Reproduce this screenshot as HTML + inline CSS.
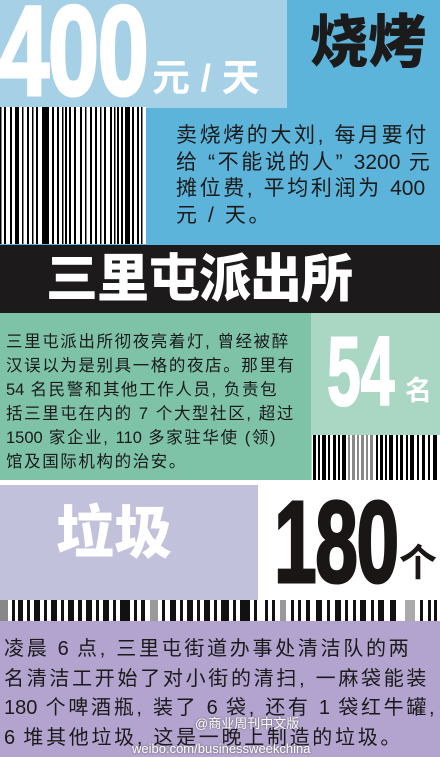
<!DOCTYPE html>
<html><head><meta charset="utf-8"><style>
*{margin:0;padding:0;box-sizing:border-box}
body{width:440px;height:757px;overflow:hidden;position:relative;background:#fff;font-family:"Liberation Sans","Noto Sans CJK SC",sans-serif}
.a{position:absolute}
.cn{font-family:"Liberation Sans","Noto Sans CJK SC",sans-serif;white-space:nowrap}
.num{font-family:"Liberation Sans Narrow","Liberation Sans",sans-serif;font-weight:bold;line-height:1;white-space:nowrap}
.l{letter-spacing:0}
</style></head><body>
<div class="a" style="left:0;top:0;width:440px;height:245px;background:#5db4da"></div>
<div class="a" style="left:0;top:0;width:287px;height:108px;background:#a6d0e6"></div>
<div class="a num" style="left:-2px;top:-12px;font-size:128px;color:#fff;transform:scaleX(0.72);transform-origin:left top;letter-spacing:-2px;-webkit-text-stroke:3px #fff">400</div>
<div class="a cn" style="left:152px;top:60px;font-size:38px;font-weight:bold;color:#fff;line-height:1">元 / 天</div>
<div class="a cn" style="left:310px;top:14px;font-size:58px;font-weight:900;color:#1b1b1b;line-height:1">烧烤</div>
<svg class="a" style="left:0;top:107px" width="146" height="137" viewBox="0 0 146 137">
<rect width="146" height="137" fill="#fff"/>
<g fill="#000">
<rect x="0" y="0" width="1.5" height="137"/><rect x="4" width="2" height="137"/><rect x="10" width="2" height="137"/><rect x="15" width="4" height="137"/><rect x="22" width="1.5" height="137"/><rect x="27" width="2" height="137"/><rect x="32" width="1.5" height="137"/><rect x="36" width="2" height="137"/><rect x="42" width="7" height="137"/><rect x="52" width="2" height="137"/><rect x="57" width="2" height="137"/><rect x="62" width="1.5" height="137"/><rect x="65" width="2" height="137"/><rect x="69" width="2" height="137"/><rect x="74" width="2" height="137"/><rect x="80" width="2" height="137"/><rect x="85" width="1.5" height="137"/><rect x="90" width="2" height="137"/><rect x="95" width="2" height="137"/><rect x="100" width="1.5" height="137"/><rect x="104" width="2" height="137"/><rect x="110" width="2" height="137"/><rect x="114" width="1.5" height="137"/><rect x="117" width="2" height="137"/><rect x="121" width="2" height="137"/><rect x="125" width="5" height="137"/><rect x="132" width="2" height="137"/><rect x="137" width="2" height="137"/><rect x="141" width="1.5" height="137"/>
</g></svg>
<div class="a cn" style="left:176px;top:123px;font-size:21px;line-height:26.5px;color:#1a1a1a;letter-spacing:2.6px">卖烧烤的大刘, 每月要付<br>给 “不能说的人” <span class="l">3200</span> 元<br>摊位费, 平均利润为 <span class="l">400</span><br>元 / 天。</div>
<div class="a" style="left:0;top:245px;width:440px;height:68px;background:#1c1a1a"></div>
<div class="a cn" style="left:46px;top:250px;font-size:52px;font-weight:900;color:#fff;line-height:60px;letter-spacing:-1px">三里屯派出所</div>
<div class="a" style="left:0;top:313px;width:311px;height:167px;background:#7ec3a8"></div>
<div class="a" style="left:311px;top:313px;width:129px;height:167px;background:#a9d7c3"></div>
<div class="a cn" style="left:6px;top:330px;font-size:16.5px;line-height:24px;color:#1a1a1a;letter-spacing:1.6px">三里屯派出所彻夜亮着灯, 曾经被醉<br>汉误以为是别具一格的夜店。那里有<br><span class="l">54</span> 名民警和其他工作人员, 负责包<br>括三里屯在内的 7 个大型社区, 超过<br><span class="l">1500</span> 家企业, <span class="l">110</span> 多家驻华使 (领)<br>馆及国际机构的治安。</div>
<div class="a num" style="left:327px;top:322px;font-size:98px;color:#fff;transform:scaleX(0.62);transform-origin:left top;-webkit-text-stroke:2px #fff">54</div>
<div class="a cn" style="left:405px;top:378px;font-size:27px;font-weight:bold;color:#fff;line-height:1">名</div>
<svg class="a" style="left:312px;top:435px" width="128" height="45" viewBox="0 0 128 45">
<rect width="128" height="45" fill="#fff"/>
<g fill="#000"><rect x="1" width="3" height="45"/><rect x="6" width="2" height="45"/><rect x="10" width="4" height="45"/><rect x="16" width="2" height="45"/><rect x="21" width="3" height="45"/><rect x="26" width="2" height="45"/><rect x="30" width="4" height="45"/></g>
<g fill="#888"><rect x="36" width="2" height="45"/><rect x="40" width="3" height="45"/><rect x="45" width="2" height="45"/><rect x="49" width="3" height="45"/><rect x="54" width="2" height="45"/><rect x="58" width="3" height="45"/></g>
<g fill="#000"><rect x="64" width="2" height="45"/><rect x="68" width="3" height="45"/><rect x="73" width="2" height="45"/><rect x="77" width="4" height="45"/><rect x="84" width="2" height="45"/><rect x="88" width="3" height="45"/><rect x="94" width="2" height="45"/><rect x="98" width="4" height="45"/><rect x="105" width="2" height="45"/><rect x="110" width="3" height="45"/><rect x="116" width="2" height="45"/><rect x="121" width="4" height="45"/></g></svg>
<div class="a" style="left:0;top:485px;width:258px;height:117px;background:#c2c1dc"></div>
<div class="a cn" style="left:56px;top:505px;font-size:58px;font-weight:900;color:#fff;line-height:1">垃圾</div>
<div class="a num" style="left:274px;top:484px;font-size:116px;color:#1a1616;transform:scaleX(0.66);transform-origin:left top;letter-spacing:-2px;-webkit-text-stroke:3px #1a1616">180</div>
<div class="a cn" style="left:399px;top:545px;font-size:38px;font-weight:bold;color:#1a1616;line-height:1">个</div>
<svg class="a" style="left:0;top:600px" width="440" height="21" viewBox="0 0 440 21">
<rect width="440" height="21" fill="#fff"/>
<rect x="0" width="8" height="21" fill="#888"/><rect x="150" width="8" height="21" fill="#999"/><rect x="280" width="6" height="21" fill="#999"/><rect x="405" width="10" height="21" fill="#aaa"/>
<g fill="#111">
<rect x="12" width="3" height="21"/><rect x="18" width="5" height="21"/><rect x="27" width="3" height="21"/><rect x="34" width="6" height="21"/><rect x="44" width="3" height="21"/><rect x="51" width="6" height="21"/><rect x="61" width="3" height="21"/><rect x="68" width="6" height="21"/><rect x="78" width="4" height="21"/><rect x="86" width="6" height="21"/><rect x="96" width="3" height="21"/><rect x="103" width="6" height="21"/><rect x="113" width="3" height="21"/><rect x="120" width="10" height="21"/><rect x="134" width="3" height="21"/><rect x="141" width="4" height="21"/><rect x="162" width="3" height="21"/><rect x="170" width="6" height="21"/><rect x="180" width="3" height="21"/><rect x="187" width="6" height="21"/><rect x="197" width="3" height="21"/><rect x="204" width="6" height="21"/><rect x="214" width="3" height="21"/><rect x="221" width="8" height="21"/><rect x="233" width="3" height="21"/><rect x="240" width="10" height="21"/><rect x="254" width="3" height="21"/><rect x="265" width="3" height="21"/><rect x="272" width="3" height="21"/><rect x="291" width="3" height="21"/><rect x="298" width="3" height="21"/><rect x="306" width="4" height="21"/><rect x="316" width="6" height="21"/><rect x="327" width="3" height="21"/><rect x="335" width="6" height="21"/><rect x="345" width="3" height="21"/><rect x="353" width="3" height="21"/><rect x="360" width="6" height="21"/><rect x="371" width="3" height="21"/><rect x="378" width="6" height="21"/><rect x="390" width="6" height="21"/><rect x="420" width="3" height="21"/><rect x="428" width="3" height="21"/><rect x="434" width="3" height="21"/>
</g></svg>
<div class="a" style="left:0;top:621px;width:440px;height:136px;background:#b3a3cf"></div>
<div class="a cn" style="left:4px;top:635px;font-size:20px;line-height:29.5px;color:#1a1a1a;letter-spacing:2.7px">凌晨 <span class="l">6</span> 点, 三里屯街道办事处清洁队的两<br>名清洁工开始了对小街的清扫, 一麻袋能装<br><span class="l">180</span> 个啤酒瓶, 装了 <span class="l">6</span> 袋, 还有 <span class="l">1</span> 袋红牛罐,<br><span class="l">6</span> 堆其他垃圾, 这是一晚上制造的垃圾。</div>
<div class="a cn" style="left:195px;top:717px;font-size:13px;color:#fff;line-height:1;text-shadow:0 0 2px #555">@商业周刊中文版</div>
<div class="a" style="left:132px;top:742px;font-size:13px;color:#fff;line-height:1;text-shadow:0 0 2px #555">weibo.com/businessweekchina</div>
</body></html>
